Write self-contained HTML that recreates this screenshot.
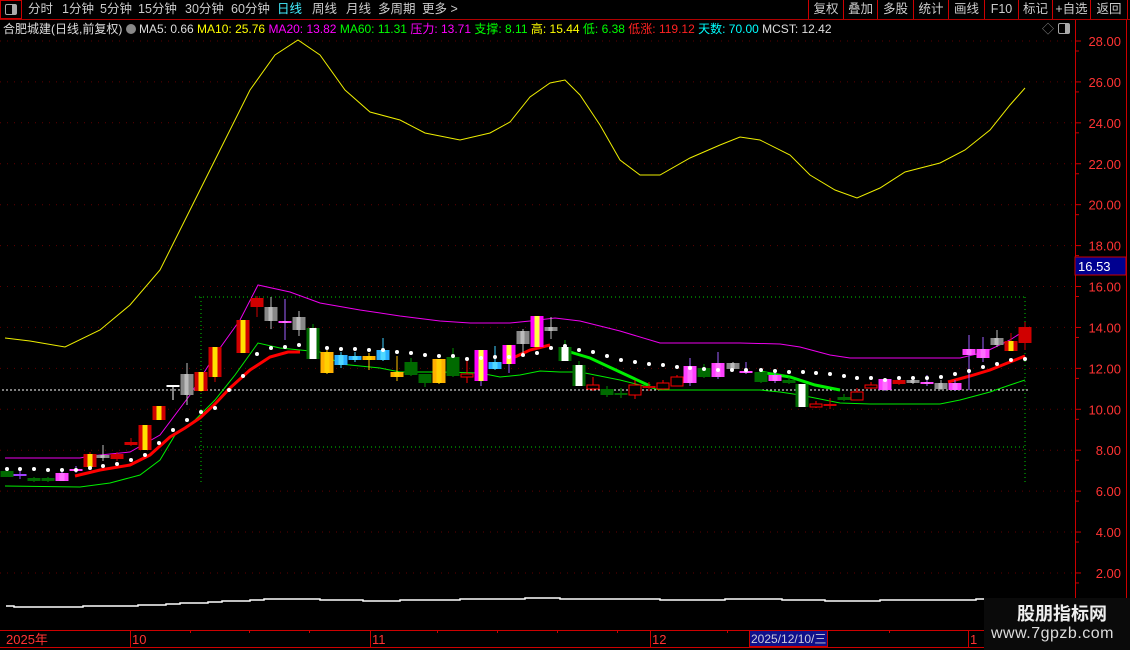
<!DOCTYPE html>
<html><head><meta charset="utf-8"><style>
body{margin:0;background:#000;width:1130px;height:650px;overflow:hidden;position:relative;font-family:"Liberation Sans","Noto Sans CJK SC",sans-serif;}
.t{position:absolute;white-space:nowrap;font-size:12px;line-height:14px;}
.m{position:absolute;top:2px;color:#ccc;font-size:12.5px;line-height:14px;white-space:nowrap}
</style></head><body>
<div style="position:absolute;left:0;top:0;width:1130px;height:19px;border-bottom:1px solid #b00000;"></div>
<div style="position:absolute;left:0;top:0;width:22px;height:19px;border:1px solid #c00;box-sizing:border-box;"></div>
<div style="position:absolute;left:5px;top:4px;width:10px;height:9px;border:1px solid #aaa;border-radius:2px;"><div style="position:absolute;right:0;top:0;width:4px;height:9px;background:#aaa"></div></div>
<div class="m" style="left:28px">分时</div>
<div class="m" style="left:62px">1分钟</div>
<div class="m" style="left:100px">5分钟</div>
<div class="m" style="left:138px">15分钟</div>
<div class="m" style="left:185px">30分钟</div>
<div class="m" style="left:231px">60分钟</div>
<div class="m" style="left:277px;color:#4ef">日线</div>
<div class="m" style="left:312px">周线</div>
<div class="m" style="left:346px">月线</div>
<div class="m" style="left:378px">多周期</div>
<div class="m" style="left:422px">更多 &gt;</div>
<div id="btns"></div>
<div class="t" style="left:3px;top:22px;font-size:12px;color:#ddd">合肥城建(日线,前复权) <span style="display:inline-block;width:10px;height:10px;border-radius:50%;background:#888;vertical-align:-1px"></span> MA5: 0.66 <span style="color:#ff0">MA10: 25.76</span> <span style="color:#f0f">MA20: 13.82</span> <span style="color:#0f0">MA60: 11.31</span> <span style="color:#f0f">压力: 13.71</span> <span style="color:#0f0">支撑: 8.11</span> <span style="color:#ff0">高: 15.44</span> <span style="color:#0f0">低: 6.38</span> <span style="color:#f22">低涨: 119.12</span> <span style="color:#0ff">天数: 70.00</span> MCST: 12.42</div>
<div class="t" style="left:1042px;top:22px;color:#888">◇</div>
<div style="position:absolute;left:1058px;top:23px;width:10px;height:9px;border:1px solid #aaa;border-radius:2px;"><div style="position:absolute;right:0;top:0;width:4px;height:9px;background:#aaa"></div></div>
<svg id="c" width="1130" height="650" style="position:absolute;left:0;top:0" xmlns="http://www.w3.org/2000/svg"></svg>
<div style="position:absolute;left:984px;top:598px;width:146px;height:52px;background:#0a0a0a"></div>
<div class="t" style="left:1017px;top:603px;color:#eee;font-size:18px;line-height:22px;font-weight:bold">股朋指标网</div>
<div class="t" style="left:991px;top:624px;color:#ddd;font-size:16px;line-height:20px;letter-spacing:0.5px">www.7gpzb.com</div>
<script>
const S=document.getElementById('c');let h='';
const Y=p=>41+(28-p)*20.46;
for(let p=28;p>=2;p-=2){const y=Y(p).toFixed(1);h+=`<line x1="0" x2="1075" y1="${y}" y2="${y}" stroke="#600000" stroke-dasharray="1,6"/>`;}
h+=`<line x1="1075.5" x2="1075.5" y1="20" y2="630" stroke="#c00"/><line x1="1126.5" x2="1126.5" y1="20" y2="650" stroke="#c00"/>`;
for(let p=28;p>=2;p-=2){const y=Y(p);h+=`<line x1="1075" x2="1081" y1="${y}" y2="${y}" stroke="#c00"/><text x="1121" y="${y+5}" fill="#f33" font-size="13" text-anchor="end" font-family="Liberation Sans">${p.toFixed(2)}</text>`;h+=`<line x1="1075" x2="1079" y1="${y+10}" y2="${y+10}" stroke="#c00"/>`;}
h+=`<rect x="1075" y="257" width="51" height="18" fill="#000090" stroke="#c00"/><text x="1078" y="271" fill="#fff" font-size="13" font-family="Liberation Sans">16.53</text>`;
h+=`<g stroke="#0c0" stroke-dasharray="1,3"><line x1="201" x2="201" y1="297" y2="485"/><line x1="1025" x2="1025" y1="297" y2="485"/><line x1="195" x2="1025" y1="297" y2="297"/><line x1="195" x2="1025" y1="447" y2="447"/></g>`;
h+=`<line x1="2" x2="1030" y1="390" y2="390" stroke="#fff" stroke-dasharray="2,2"/>`;
const pl=(pts,c,w)=>`<polyline fill="none" stroke="${c}" stroke-width="${w}" points="${pts}"/>`;
h+=pl("5,338 30,341 65,347 100,330 130,305 160,270 190,210 220,150 250,90 275,55 298,40 320,55 345,90 370,112 400,120 425,133 460,140 490,133 510,122 530,97 550,83 565,80 580,95 600,125 620,160 640,175 660,175 690,158 720,145 740,137 760,140 790,155 810,175 835,190 857,198 880,188 905,172 940,163 965,150 990,130 1010,105 1025,88","#ee0",1);
h+=pl("5,458 80,458 90,456 130,452 160,435 190,395 215,355 240,320 258,285 290,292 320,303 360,310 400,316 440,321 470,323 510,323 530,321 555,318 580,321 620,331 660,343 700,343 740,343 780,344 800,347 830,355 850,358 960,358 985,352 1010,340 1030,327","#e0e",1);
h+=pl("5,486 80,487 110,483 140,475 160,460 175,435 195,420 215,400 235,375 258,343 280,348 300,350 320,352 340,364 380,368 400,372 440,372 480,373 500,377 520,375 540,371 560,372 580,372 620,380 660,390 760,390 780,392 800,395 840,403 870,404 940,404 960,400 990,392 1010,385 1025,380","#0e0",1);
h+=pl("560,349 590,358 620,372 650,386","#0e0",3)+pl("760,372 790,377 815,385 840,390","#0e0",3);
h+=pl("75,476 100,470 130,465 150,455 170,437 185,428 200,418 215,404 230,388 250,370 270,357 288,352 300,352","#f00",3);
h+=pl("515,357 530,350 550,345","#f00",3)+pl("948,382 970,376 990,370 1010,362 1025,356","#f00",3);
const C=[[7,471,477,471,477,'g'],[20,474,475,470,479,'p'],[34,478,481,477,482,'g'],[48,478,481,477,482,'g'],[62,473,481,469,481,'m'],[76,469,471,466,473,'m'],[90,454,467,452,467,'ry'],[103,455,458,445,461,'s'],[117,454,459,452,461,'r'],[131,442,445,438,446,'r'],[145,425,450,425,450,'ry'],[159,406,420,406,420,'ry'],[173,385,386,385,400,'w'],[187,374,395,363,405,'s'],[201,372,391,372,392,'ry'],[215,347,377,347,382,'ry'],[243,320,353,320,353,'ry'],[257,298,307,296,317,'r'],[271,307,321,297,329,'s'],[285,321,323,299,340,'m'],[299,317,330,311,336,'s'],[313,328,359,324,359,'wg'],[327,352,373,350,374,'y'],[341,355,365,352,368,'b'],[355,356,360,352,362,'b'],[369,356,360,353,370,'y'],[383,350,360,338,361,'b'],[397,372,377,356,381,'y'],[411,362,375,358,376,'g'],[425,374,383,374,387,'g'],[439,359,383,359,384,'y'],[453,357,376,348,377,'g'],[467,374,377,360,383,'rh'],[481,350,381,350,386,'my'],[495,362,369,346,370,'b'],[509,345,364,345,373,'my'],[523,331,344,329,355,'s'],[537,316,347,316,347,'my'],[551,327,331,317,339,'s'],[565,347,361,340,361,'wg'],[579,365,386,361,386,'wg'],[593,385,389,377,391,'rh'],[607,389,395,386,397,'g'],[621,393,394,388,398,'g'],[635,385,395,380,399,'rh'],[649,386,387,382,391,'r'],[663,383,389,380,390,'rh'],[677,377,386,375,386,'rh'],[690,366,383,358,386,'m'],[704,368,377,364,378,'g'],[718,363,377,352,379,'m'],[733,363,369,362,371,'s'],[746,371,373,362,374,'m'],[761,372,382,369,383,'g'],[775,375,381,370,383,'m'],[789,380,383,377,384,'g'],[802,384,407,384,407,'wg'],[816,404,407,401,408,'rh'],[830,404,406,398,409,'r'],[844,397,400,394,401,'g'],[857,392,400,388,400,'rh'],[871,385,388,382,389,'rh'],[885,379,390,379,391,'m'],[899,380,384,379,385,'r'],[913,380,383,378,384,'s'],[927,382,383,375,386,'m'],[941,383,389,380,390,'s'],[955,383,390,380,391,'m'],[969,349,355,335,390,'m'],[983,349,358,337,362,'m'],[997,338,345,330,347,'s'],[1011,341,351,333,351,'ry'],[1025,327,343,322,350,'r']];
const col={g:'#006a00',p:'#a040ff',m:'#ff40ff',ry:'#d00000',s:'#888',r:'#d00000',w:'#fff',wg:'#006a00',y:'#ffb000',b:'#2ab0ff',rh:'#f00',my:'#ff00ff'};
const wc={g:'#009000',p:'#a040ff',m:'#a060ff',ry:'#d00000',s:'#bbb',r:'#d00000',w:'#fff',wg:'#009000',y:'#ffc000',b:'#40d0ff',rh:'#f00',my:'#a060ff'};
for(const [x,t,b,wt,wb,k] of C){const w=13,l=x-6.5;h+=`<line x1="${x}" x2="${x}" y1="${wt}" y2="${wb}" stroke="${wc[k]}"/>`;
 const hh=Math.max(b-t,2);
 if(k=='rh'){h+=`<rect x="${l+0.5}" y="${t}" width="${w-1}" height="${hh}" fill="#000" stroke="#f00"/>`;}
 else h+=`<rect x="${l}" y="${t}" width="${w}" height="${hh}" fill="${col[k]}"/>`;
 if(k=='ry')h+=`<rect x="${l+4}" y="${t}" width="5" height="${hh}" fill="#ffe000"/>`;
 if(k=='my')h+=`<rect x="${l+4}" y="${t}" width="5" height="${hh}" fill="#ffff40"/>`;
 if(k=='wg')h+=`<rect x="${l+3}" y="${t}" width="7" height="${hh}" fill="#fff"/>`;
 if(k=='s')h+=`<rect x="${l+4}" y="${t}" width="4" height="${hh}" fill="#bbb"/>`;
 if(k=='y')h+=`<rect x="${l+4}" y="${t}" width="5" height="${hh}" fill="#ffd000"/>`;
 if(k=='b')h+=`<rect x="${l+4}" y="${t}" width="5" height="${hh}" fill="#50d8ff"/>`;
 if(k=='m')h+=`<rect x="${l+4}" y="${t}" width="5" height="${hh}" fill="#ff70ff"/>`;
}
const D=[[7,469],[20,469],[34,469],[48,470],[62,470],[76,470],[90,468],[103,466],[117,464],[131,460],[145,455],[159,443],[173,430],[187,420],[201,412],[215,408],[229,390],[243,376],[257,354],[271,348],[285,347],[299,345],[313,342],[327,348],[341,349],[355,349],[369,350],[383,350],[397,352],[411,353],[425,355],[439,356],[453,356],[467,359],[481,358],[495,357],[509,357],[523,355],[537,353],[551,348],[565,346],[579,350],[593,352],[607,356],[621,360],[635,362],[649,364],[663,365],[677,367],[690,368],[704,369],[718,370],[732,370],[746,370],[761,370],[775,371],[789,372],[803,372],[816,373],[830,374],[844,376],[857,378],[871,378],[885,380],[899,378],[913,378],[927,378],[941,377],[955,374],[969,371],[983,367],[997,364],[1011,360],[1025,359]];
for(const [x,y] of D)h+=`<circle cx="${x}" cy="${y}" r="2" fill="#fff"/>`;
h+=pl("6,606 14,606 14,607 83,607 83,606 138,606 138,605 166,605 166,604 180,604 180,603 208,603 208,602 222,602 222,601 250,601 250,600 264,600 264,599 320,599 320,600 363,600 363,601 400,601 400,600 460,600 460,599 525,599 525,598 560,598 560,599 660,599 660,600 725,600 725,599 782,599 782,600 825,600 825,601 880,601 880,600 976,600 976,599 984,599","#fff",1.5);
h+=`<line x1="0" x2="984" y1="630.5" y2="630.5" stroke="#c00"/><line x1="0" x2="984" y1="647.5" y2="647.5" stroke="#c00"/>`;
for(const x of [130,370,650,968])h+=`<line x1="${x}.5" x2="${x}.5" y1="630" y2="647" stroke="#c00"/>`;
for(const x of [190,249,309,437,497,557,617,727,889])h+=`<line x1="${x}.5" x2="${x}.5" y1="630" y2="633" stroke="#c00"/>`;
h+=`<g fill="#f33" font-size="13" font-family="Liberation Sans,Noto Sans CJK SC,sans-serif"><text x="6" y="644">2025年</text><text x="132" y="644">10</text><text x="372" y="644">11</text><text x="652" y="644">12</text><text x="970" y="644">1</text></g>`;
h+=`<rect x="749.5" y="630.5" width="78" height="16" fill="#10108a" stroke="#c00"/><text x="751" y="643" fill="#ccd" font-size="12" font-family="Liberation Sans,Noto Sans CJK SC,sans-serif">2025/12/10/三</text>`;
S.innerHTML=h;
const B=['复权','叠加','多股','统计','画线','F10','标记','+自选','返回'];
const xs=[808,843,877,913,948,984,1018,1052,1090,1127];
let bh='';
B.forEach((b,i)=>{const l=xs[i],w=xs[i+1]-xs[i];bh+=`<div style="position:absolute;left:${l}px;top:0;width:${w}px;height:19px;border-left:1px solid #c00;box-sizing:border-box;color:#ccc;font-size:12.5px;line-height:18px;text-align:center;overflow:hidden;white-space:nowrap">${b}</div>`;});
bh+=`<div style="position:absolute;left:1127px;top:0;width:1px;height:19px;background:#c00"></div>`;
document.getElementById('btns').innerHTML=bh;
</script>
</body></html>
